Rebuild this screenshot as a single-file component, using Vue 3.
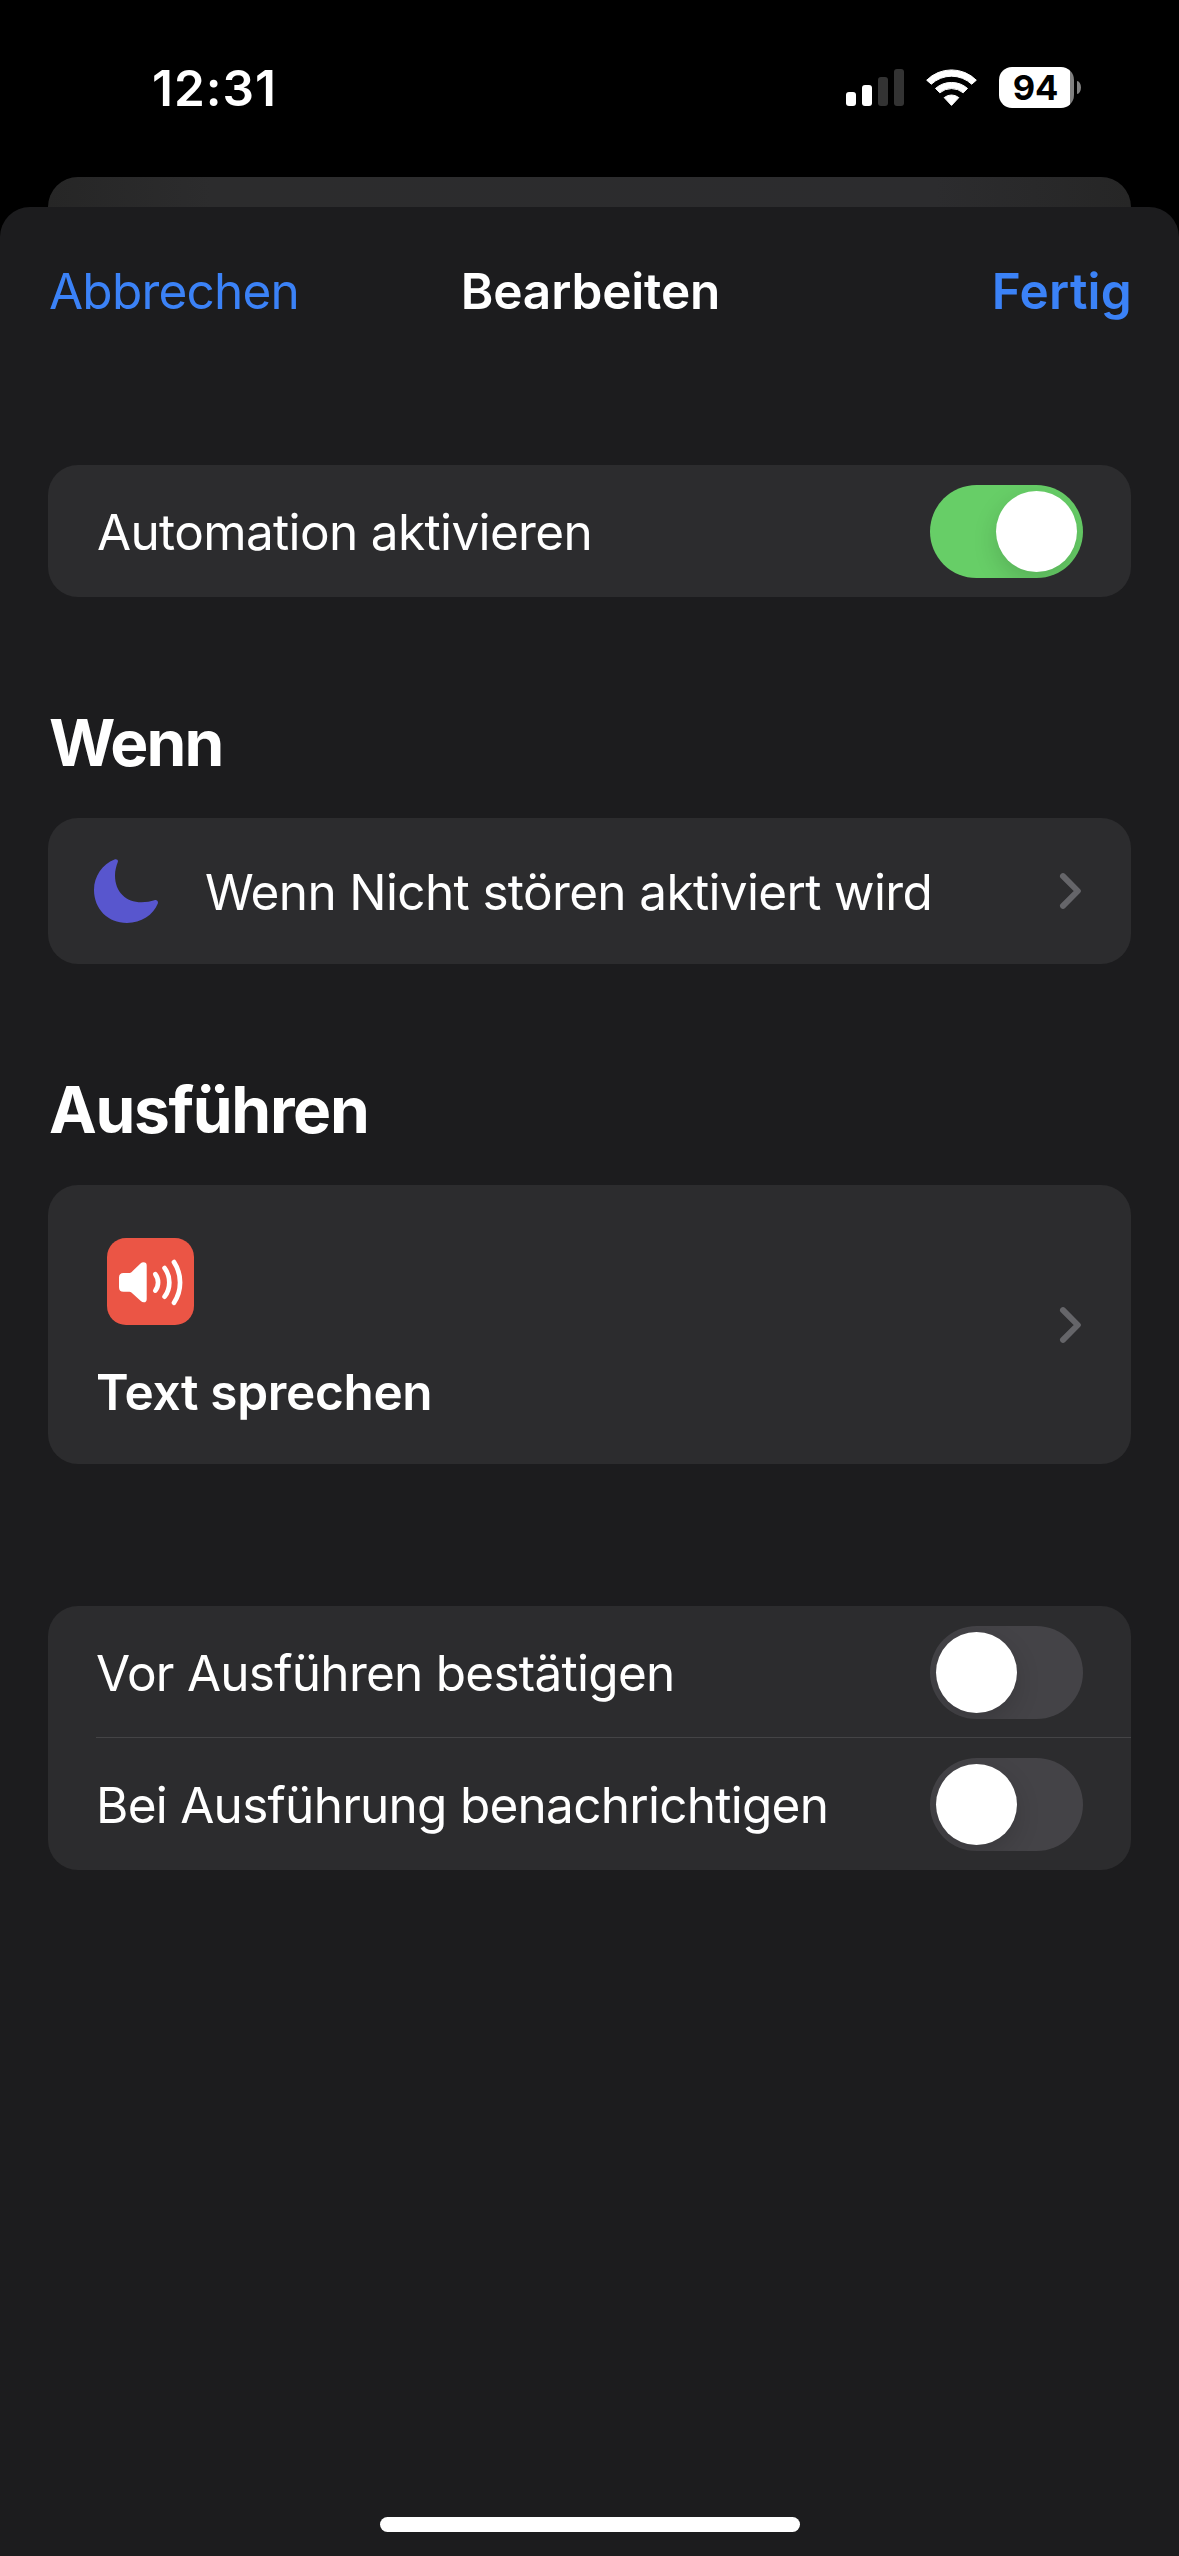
<script setup>
const confirmRows = [
  { label: 'Vor Ausführen bestätigen' },
  { label: 'Bei Ausführung benachrichtigen' },
]
</script>

<template>
  <div class="screen">
    <header class="status">
      <span class="time">12:31</span>
      <div class="indicators">
        <svg class="signal" width="58" height="38" viewBox="0 0 58 38">
          <rect x="0" y="23" width="10" height="14" rx="3" fill="#fff" />
          <rect x="16" y="16" width="10" height="21" rx="3" fill="#fff" />
          <rect x="32" y="8" width="10" height="29" rx="3" fill="#333" />
          <rect x="48" y="0" width="10" height="37" rx="3" fill="#333" />
        </svg>
        <svg class="wifi" width="51" height="38" viewBox="0 0 51 38" fill="#fff" stroke="#fff" stroke-width="1" stroke-linejoin="round">
          <path d="M.7 11.2A35 35 0 0 1 50.3 11.2L45.7 15.2A29.5 29.5 0 0 0 5.3 15.2Z" />
          <path d="M9.5 19.4A24.5 24.5 0 0 1 41.5 19.4L37.2 23.8A18.3 18.3 0 0 0 13.8 23.8Z" />
          <path d="M18.2 28.6A11.5 11.5 0 0 1 32.8 28.6L25.5 36.4Z" />
        </svg>
        <div class="battery">
          <div class="cell"><span>94</span></div>
          <div class="nub"></div>
        </div>
      </div>
    </header>
    <div class="back-sheet"></div>

    <main class="sheet">
      <nav class="nav">
        <span class="cancel">Abbrechen</span>
        <span class="title">Bearbeiten</span>
        <span class="done">Fertig</span>
      </nav>

      <section class="card row enable">
        <span class="label">Automation aktivieren</span>
        <div class="toggle on"><i></i></div>
      </section>

      <h2 class="h-when">Wenn</h2>
      <section class="card row when">
        <svg class="moon" width="64" height="64" viewBox="0 0 64 64">
          <path fill="#5856ce" d="M20.5.5C22.5-.3 24.5.8 23.8 3 22.3 7 21 11.5 21 16.5 21 33 32 43.3 47.5 43.3 52 43.3 57 42.6 60.3 41.3 62.7 40.4 64.6 42.3 63.8 44.6 59.5 56 47 64 33 64 14 64 0 50 0 31 0 17 8.5 5 20.5.5Z" />
        </svg>
        <span class="label trigger">Wenn Nicht stören aktiviert wird</span>
        <svg class="chevron" width="23" height="36" viewBox="0 0 23 36"><path d="M4 3.2 18.8 18 4 32.8" /></svg>
      </section>

      <h2 class="h-do">Ausführen</h2>
      <section class="card row action">
        <div class="action-body">
          <svg class="speaker" width="87" height="87" viewBox="0 0 87 87">
            <rect width="87" height="87" rx="19" fill="#eb5545" />
            <path fill="#fff" d="M12 39.5Q12 35 16.5 35H22.5Q23.6 35 24.4 34.2L33.5 25.6Q34.8 24.3 36.5 24.3 39.7 24.3 39.7 27.5V61.2Q39.7 64.3 36.8 64.3 35.2 64.3 33.8 63L24.4 54.6Q23.6 53.8 22.5 53.8H16.5Q12 53.8 12 49.3Z" />
            <g fill="none" stroke="#fff" stroke-width="4.7" stroke-linecap="round">
              <path d="M48.3 36.2A13.5 13.5 0 0 1 48.3 52.6" />
              <path d="M57.6 30.1A24 24 0 0 1 57.6 58.7" />
              <path d="M67 24.1A37 37 0 0 1 67 64.7" />
            </g>
          </svg>
          <span class="speak">Text sprechen</span>
        </div>
        <svg class="chevron" width="23" height="36" viewBox="0 0 23 36"><path d="M4 3.2 18.8 18 4 32.8" /></svg>
      </section>

      <section class="card options">
        <div v-for="row in confirmRows" :key="row.label" class="row option">
          <span class="label">{{ row.label }}</span>
          <div class="toggle"><i></i></div>
        </div>
      </section>
      <div class="home"></div>
    </main>
  </div>
</template>

<style>
body { background: #000; }
</style>

<style scoped>
.screen {
  width: 1179px;
  height: 2556px;
  background: #000;
  overflow: hidden;
  display: flex;
  flex-direction: column;
  font-family: Inter, "Liberation Sans", sans-serif;
  font-size: 49.5px;
  line-height: 60px;
  color: #fff;
  white-space: nowrap;
}
.status {
  height: 177px;
  flex: none;
  display: flex;
  justify-content: space-between;
  padding: 0 98px 0 152px;
  box-sizing: border-box;
}
.time { margin-top: 58px; font-weight: 600; letter-spacing: 1px; }
.indicators { display: flex; align-items: flex-start; }
.signal { margin-top: 69px; }
.wifi { margin: 69px 0 0 22px; }
.battery { display: flex; align-items: center; gap: 3px; margin: 67px 0 0 22px; }
.cell {
  width: 75px;
  height: 41px;
  border-radius: 13px;
  background: linear-gradient(90deg, #fff 71px, #808080 71px);
  color: #000;
  font-size: 34.5px;
  font-weight: 700;
  line-height: 41px;
  text-align: center;
}
.cell span { margin-right: 2px; }
.nub { width: 4px; height: 13px; border-radius: 0 4px 4px 0 / 0 6.5px 6.5px 0; background: #808080; }
.back-sheet {
  flex: none;
  height: 30px;
  margin: 0 48px;
  border-radius: 30px 30px 0 0;
  background: linear-gradient(90deg, #262626, #2c2c2d 15%, #2c2c2e 82%, #262626);
}
.sheet {
  flex: 1;
  display: flex;
  flex-direction: column;
  background: #1c1c1e;
  border-radius: 30px 30px 0 0;
}
.nav {
  display: grid;
  grid-template-columns: 1fr auto 1fr;
  margin: 54px 47px 0 49px;
  height: 60px;
}
.cancel { color: #3b82f7; justify-self: start; letter-spacing: -0.79px; }
.title { font-weight: 600; letter-spacing: -0.14px; }
.done { color: #3b82f7; font-weight: 600; justify-self: end; letter-spacing: 0.24px; }
.card { background: #2c2c2e; border-radius: 30px; margin: 0 48px; flex: none; }
.row { display: flex; align-items: center; justify-content: space-between; padding: 0 48px; box-sizing: border-box; }
.label { margin-top: 2px; letter-spacing: -0.74px; }
.enable { height: 132px; margin-top: 144px; padding-left: 49px; }
.enable .label { letter-spacing: -0.65px; }
.toggle { width: 153px; height: 93px; border-radius: 47px; background: #444347; padding: 6px; box-sizing: border-box; overflow: hidden; display: flex; }
.toggle i { width: 81px; height: 81px; border-radius: 50%; background: #fff; box-shadow: 0 9px 24px rgba(0, 0, 0, .15); }
.toggle.on { background: #67ce67; justify-content: flex-end; }
h2 { margin: 0 49px; font-size: 64px; font-weight: 700; line-height: 78px; height: 78px; letter-spacing: -1.29px; }
.h-when { margin-top: 107px; letter-spacing: -1.9px; }
.when { height: 146px; margin-top: 36px; padding-left: 46px; }
.trigger { flex: 1; margin-left: 47px; letter-spacing: -0.645px; }
.chevron { margin-right: 1px; fill: none; stroke: #656569; stroke-width: 6; stroke-linecap: round; stroke-linejoin: round; }
.h-do { margin-top: 107px; }
.action { height: 279px; margin-top: 36px; }
.action-body { display: flex; flex-direction: column; padding-top: 11px; }
.speaker { margin: 0 0 37px 11px; }
.speak { font-weight: 600; letter-spacing: -0.325px; }
.options { margin-top: 142px; }
.option { height: 132px; }
.option + .option { background: linear-gradient(#444446, #444446) 48px 0 / calc(100% - 48px) 1px no-repeat; }
.option:first-child { border-radius: 30px 30px 0 0; background: linear-gradient(#444446, #444446) 48px 131px / 100% 1px no-repeat; }
.option + .option { background: none; }
.home { width: 420px; height: 15px; border-radius: 8px; background: #fff; margin: auto auto 24px; }
</style>
